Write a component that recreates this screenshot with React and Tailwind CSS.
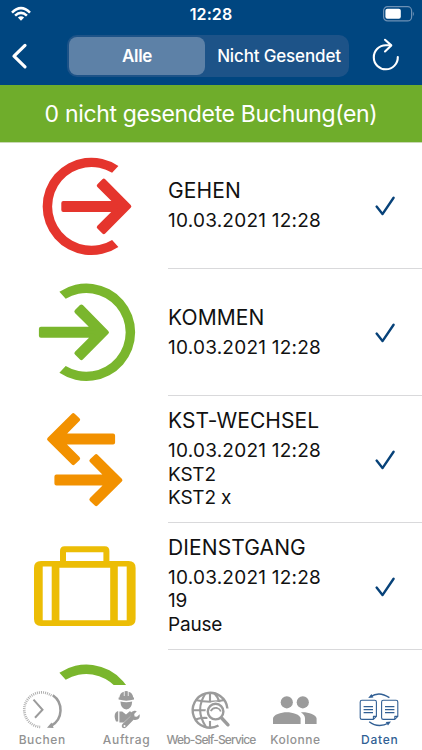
const ARROW = "M-2 0 L-27.5-25.8 L-32.5-20.8 L-15.2-3.5 H-68 V3.5 H-15.2 L-32.5 20.8 L-27.5 25.8 Z";
const ARROW_SHORT = "M-2 0 L-26.2-24 L-31-19.4 L-15.2-3.5 H-66 V3.5 H-15.2 L-31 19.4 L-26.2 24 Z";
// open ring around its own centre, gap on the right
const RING = "M27-40.5 A48.7 48.7 0 1 0 27 40.5 L20.7 33.6 A39.4 39.4 0 1 1 20.7-33.6 Z";

function Arrow({ d = ARROW, color, transform }) {
  return (
    <path d={d} transform={transform} fill={color} stroke={color} strokeWidth="4" strokeLinejoin="round" />
  );
}

function GehenIcon() {
  return (
    <>
      <path d={RING} transform="translate(91.4 63.4)" fill="#e5352d" />
      <Arrow color="#e5352d" transform="translate(131.3 63.4)" />
    </>
  );
}

function KommenIcon() {
  return (
    <>
      <path d={RING} transform="translate(86.4 63.3) scale(-1 1)" fill="#7ab62d" />
      <Arrow color="#7ab62d" transform="translate(108.9 63.3)" />
    </>
  );
}

function WechselIcon() {
  return (
    <>
      <Arrow d={ARROW_SHORT} color="#f29100" transform="translate(47.1 43.1) scale(-1 1)" />
      <Arrow d={ARROW_SHORT} color="#f29100" transform="translate(122.4 84.1)" />
    </>
  );
}

function DienstgangIcon() {
  return (
    <path
      fill="#ecbd05"
      fillRule="evenodd"
      d="M60 38 V28 Q60 23.2 64.6 23.2 H104.9 Q109.4 23.2 109.4 28 V38 H128.6 Q135.6 38 135.6 45 V96 Q135.6 103 128.6 103 H41 Q34 103 34 96 V45 Q34 38 41 38 Z M66 29.2 V38 H103.4 V29.2 Z M42.7 43.6 V97.3 H51.7 V43.6 Z M59.4 44.8 V97.3 H110.2 V44.8 Z M117.8 43.6 V97.3 H126.7 V43.6 Z"
    />
  );
}

const bookings = [
  { icon: GehenIcon, title: "GEHEN", date: "10.03.2021 12:28", details: [] },
  { icon: KommenIcon, title: "KOMMEN", date: "10.03.2021 12:28", details: [] },
  { icon: WechselIcon, title: "KST-WECHSEL", date: "10.03.2021 12:28", details: ["KST2", "KST2 x"] },
  { icon: DienstgangIcon, title: "DIENSTGANG", date: "10.03.2021 12:28", details: ["19", "Pause"] },
];

function BookingIcon({ icon: Icon }) {
  return (
    <svg className="h-[126.7px] w-[168px] shrink-0" viewBox="0 0 168 126.7">
      <Icon />
    </svg>
  );
}

function BookingRow({ booking }) {
  return (
    <li className="flex h-[126.8px] shrink-0">
      <BookingIcon icon={booking.icon} />
      <div className="flex flex-1 items-center border-b border-[#d9d9db]">
        <div className="flex-1 pb-[1.5px] whitespace-nowrap text-[#111]">
          <div className="pb-1 text-[21px] leading-[28px] tracking-[0.1px]">{booking.title}</div>
          <div className="text-[19px] leading-[23.3px] tracking-[0.23px]">{booking.date}</div>
          {booking.details.map((line) => (
            <div key={line} className="text-[19px] leading-[23.3px] tracking-[-0.2px]">{line}</div>
          ))}
        </div>
        <svg className="mt-[2px] mr-[26px] h-6 w-6 shrink-0" viewBox="0 0 24 24" fill="none" stroke="#074279" strokeWidth="2.4" strokeLinecap="round" strokeLinejoin="round">
          <path d="M4.6 12.6 L10.5 20.1 L21.6 3.8" />
        </svg>
      </div>
    </li>
  );
}

function BuchenIcon() {
  return (
    <g fill="none" stroke="#9b9b9b">
      <path d="M51.4 15.5 A17.3 17.3 0 1 0 41 47" strokeWidth="2.6" strokeDasharray="1 1" opacity="0.8" />
      <path d="M52.8 15.2 A18 18 0 0 1 51.5 45.6" strokeWidth="2.5" />
      <path d="M47 47.8 L51.6 42.6 L53.6 48 Z" fill="#9b9b9b" stroke="none" />
      <path d="M33.5 19.6 L42.5 29.8 L35 37.8" strokeWidth="2" />
    </g>
  );
}

function AuftragIcon() {
  return (
    <g fill="#9b9b9b">
      <path d="M34.4 17.6 Q34.8 13 38.8 11.8 V16 H39.6 V11.2 Q41.2 10.6 42.8 11.2 V16 H43.6 V11.8 Q47.8 13 48.2 17.6 H49 V19.6 Q41.2 21.8 33.6 19.6 V17.6 Z" />
      <path d="M35.4 21.6 Q41.2 23 47.2 21.6 Q46.8 29 41.3 29.6 Q35.8 29 35.4 21.6 Z" />
      <path d="M33.2 31 V41.4 H31 Q28.6 36.4 30.4 33 Q31.4 31.4 33.2 31 Z" />
      <path d="M34.4 31.4 H37.2 L41 34.4 L44.8 31.2 Q46.4 31.4 46 33 L45.6 36 L38.7 42.4 H34.4 Z" />
      <path d="M51.8 31.2 L49.2 34 L49.6 36.4 L52 36.7 L54.6 34.2 Q55.4 38.2 52.4 39.6 Q50.4 40.4 48.6 39.8 L42 46.6 Q39.8 49.2 37.5 47.8 Q35.8 45.6 38 43.4 L45.2 36.4 Q44.6 31.6 49.4 30.8 Q50.8 30.6 51.8 31.2 Z" />
      <circle cx="39.5" cy="45.9" r="1" fill="#fff" />
    </g>
  );
}

function WebIcon() {
  return (
    <g fill="none" stroke="#9b9b9b" strokeWidth="2.4">
      <path d="M58.4 28.5 A17.4 17.4 0 1 0 49.5 45.5" />
      <path d="M36.8 13 Q25.5 29.5 36.8 46.5 M45 13 Q49.5 17.5 50.4 22.5" strokeWidth="2.1" />
      <path d="M26.5 20 Q41 23.5 55.5 20 M23.8 30.2 H37 M26.5 39.4 Q32 37.4 38.5 38 M41 12 V22.5 M41 41 V47" strokeWidth="2.1" />
      <circle cx="46.6" cy="31.6" r="10.2" fill="#fff" stroke="none" />
      <circle cx="46.6" cy="31.6" r="7.8" />
      <path d="M41.8 31.2 Q43.4 27.4 48 28 Q51 28.8 51.8 31.4" strokeWidth="1.8" />
      <path d="M52.6 38 L59 44.8" strokeWidth="3.4" strokeLinecap="round" />
    </g>
  );
}

function KolonneIcon() {
  return (
    <g fill="#9b9b9b">
      <circle cx="33.8" cy="22.3" r="6.1" />
      <circle cx="49.8" cy="22.3" r="6.1" />
      <path d="M20 44 V38.6 C20 34.6 28.2 32.2 33.8 32.2 S47.6 34.6 47.6 38.6 V44 Z" />
      <path d="M48 32.4 C54 31.8 63.6 34.6 63.6 38.6 V44 H52 V38.6 Q52 34.6 48 32.4 Z" />
    </g>
  );
}

function DatenIcon() {
  return (
    <g fill="none" stroke="#315f94" strokeWidth="1.1" strokeLinejoin="round" transform="translate(-.8)">
      <path d="M24.7 20.2 H37.5 Q39.2 20.2 39.2 21.9 V36.4 L36.2 39.4 H24.7 Q23 39.4 23 37.7 V21.9 Q23 20.2 24.7 20.2 Z M36.2 39.4 V36.4 H39.2" />
      <path d="M46.1 20.2 H58.9 Q60.6 20.2 60.6 21.9 V36.4 L57.6 39.4 H46.1 Q44.4 39.4 44.4 37.7 V21.9 Q44.4 20.2 46.1 20.2 Z M57.6 39.4 V36.4 H60.6" />
      <path d="M26.4 26.6 H35.8 M26.4 29.6 H35.8 M26.4 32.6 H35.8 M47.8 26.6 H57.2 M47.8 29.6 H57.2 M47.8 32.6 H57.2" />
      <path d="M33.5 16.6 Q42 10.8 52.2 17.6 M32 41.8 Q41 48.6 51.6 43" strokeWidth="1.4" />
      <path d="M31 18 L34.2 14 L36.2 17.6 Z M53.8 41.6 L48.6 42 L50.8 45.6 Z" fill="#315f94" stroke="none" />
    </g>
  );
}

const tabs = [
  { label: "Buchen", icon: BuchenIcon, className: "text-[#929292] tracking-[0.6px]" },
  { label: "Auftrag", icon: AuftragIcon, className: "text-[#929292] tracking-[0.7px]" },
  { label: "Web-Self-Service", icon: WebIcon, className: "text-[#929292] tracking-[-0.84px]" },
  { label: "Kolonne", icon: KolonneIcon, className: "text-[#929292] tracking-[0.5px]" },
  { label: "Daten", icon: DatenIcon, className: "text-[#315f94] tracking-[0.75px]" },
];

export default function App() {
  return (
    <div className="flex h-[750px] w-[422px] flex-col overflow-hidden bg-white font-['Inter',sans-serif]">
      <header className="h-[84.5px] shrink-0 bg-[#004680] text-white">
        {/* status bar */}
        <div className="grid h-7 grid-cols-3 items-center">
          <svg className="ml-[11px] h-5 w-5" viewBox="0 0 20 20" fill="none" stroke="white" strokeWidth="2.5">
            <path d="M1 8.6 Q10-.4 19 8.6" />
            <path d="M4.1 11.7 Q10 6 15.9 11.7" />
            <path d="M6.9 13.5 Q10 11 13.1 13.5 L10 16.8 Z" fill="white" stroke="none" />
          </svg>
          <span className="text-center text-[16px] leading-7 font-semibold tracking-[0.1px]">12:28</span>
          <svg className="mr-[7px] h-4 w-8 justify-self-end" viewBox="0 0 32 16">
            <rect x="0.6" y="0.7" width="28" height="14.2" rx="4" fill="none" stroke="#6d91b5" strokeWidth="1.2" />
            <rect x="2.4" y="2.8" width="15.4" height="10" rx="2" fill="white" />
            <path d="M29.9 5.4 Q31.9 7.8 29.9 10.2 Z" fill="#6d91b5" />
          </svg>
        </div>

        {/* back, filter, reload */}
        <div className="flex h-[56px] items-center">
          <svg className="ml-2 h-8 w-6" viewBox="0 0 24 32" fill="none" stroke="white" strokeWidth="3.2" strokeLinecap="round" strokeLinejoin="round">
            <path d="M17 5.4 L6 16.1 L17 26.8" />
          </svg>
          <div className="ml-[35px] flex h-[42px] w-[282px] rounded-[10px] bg-[#1d5388] p-[2px] text-[17px]">
            <button className="w-[136px] rounded-[8px] bg-[#5d81a7] pt-px font-semibold tracking-[-0.3px]">Alle</button>
            <button className="flex-1 pt-px pl-[6px] font-medium whitespace-nowrap tracking-[-0.15px]">Nicht Gesendet</button>
          </div>
          <svg className="ml-[21px] h-9 w-8" viewBox="0 0 32 36" fill="none" stroke="white" strokeWidth="2.1" strokeLinecap="round" strokeLinejoin="round">
            <path d="M20.5 7.2 L15.8 7.3 A12 12 0 1 0 27.8 19" />
            <path d="M15 1.8 L21.3 7.4 L15 13.5" />
          </svg>
        </div>
      </header>

      <div className="h-[58px] shrink-0 border-b border-[#c9d8b4] bg-[#6fad2b] text-center text-[23px] leading-[59px] tracking-[-0.33px] whitespace-nowrap text-white">
        0 nicht gesendete Buchung(en)
      </div>

      <ul className="flex h-[542.5px] shrink-0 flex-col overflow-hidden">
        {bookings.map((booking) => (
          <BookingRow key={booking.title} booking={booking} />
        ))}
        {/* next booking, still mostly below the fold */}
        <li className="flex shrink-0">
          <BookingIcon icon={KommenIcon} />
        </li>
      </ul>

      <nav className="flex h-[65px] shrink-0 bg-white">
        {tabs.map(({ label, icon: Icon, className }) => (
          <a key={label} href="#" className={`flex w-[84.4px] shrink-0 flex-col items-center ${className}`}>
            <svg className="h-12 w-[84px] shrink-0" viewBox="0 5 84 48">
              <Icon />
            </svg>
            <span className="-mt-px text-[12px] leading-[15px] font-medium whitespace-nowrap">{label}</span>
          </a>
        ))}
      </nav>
    </div>
  );
}
